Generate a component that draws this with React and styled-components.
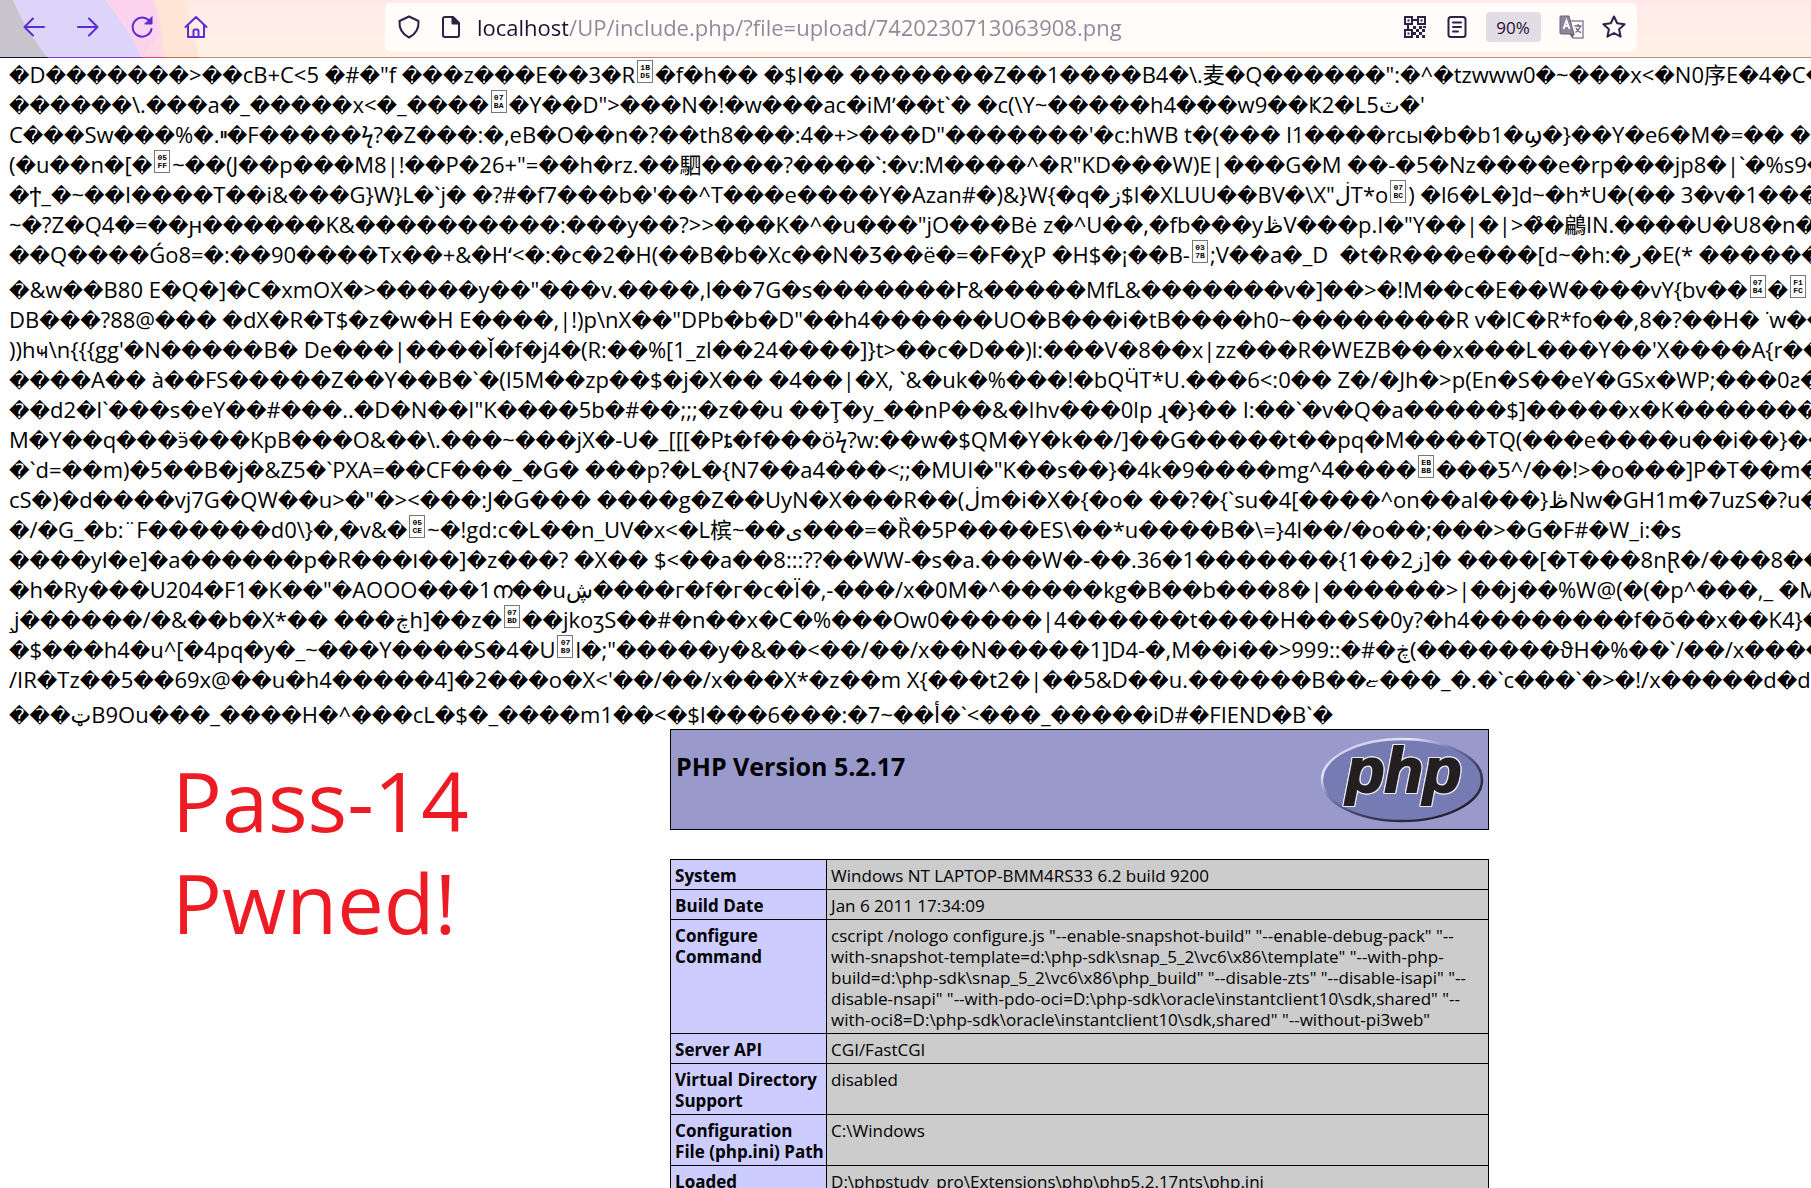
import React from "react";
import styled, { createGlobalStyle, css } from "styled-components";

const Global = createGlobalStyle`
  * { box-sizing: border-box; }
  html, body { margin: 0; background: #fff; }
  body {
    color: #000;
    font-family: "Open Sans", "Noto Sans", "DejaVu Sans", "Noto Sans CJK SC", sans-serif;
    overflow: hidden;
  }
`;

const Window = styled.div`
  height: 100vh;
  display: flex;
  flex-direction: column;
  overflow: hidden;
`;

/* ---------- browser toolbar ---------- */

const Toolbar = styled.header`
  position: relative;
  flex: none;
  display: flex;
  align-items: center;
  height: 58px;
  padding: 0 0 4px 7px;
  background: linear-gradient(#ffe9e8, #fff2e5);
`;

const ThemeArt = styled.svg`
  position: absolute;
  inset: 0;
  width: 100%;
  height: 58px;
`;

const NavGroup = styled.nav`
  position: relative;
  display: flex;
  width: 216px;
`;

const Spacer = styled.div`
  flex: ${(p) => p.$grow} 1 0;
`;

const IconButton = styled.button`
  display: flex;
  align-items: center;
  justify-content: center;
  width: ${(p) => p.$w || 54}px;
  height: 48px;
  padding: 0;
  border: 0;
  background: none;
  color: ${(p) => (p.$nav ? "#5b2bd3" : "#2b2149")};
`;

const UrlBar = styled.form`
  position: relative;
  flex: 100 1 0;
  display: flex;
  align-items: center;
  height: 48px;
  padding: 0 2px 0 4px;
  border-radius: 5px;
  background: #fffcfa;
`;

const UrlInput = styled.input`
  flex: 1;
  min-width: 0;
  height: 40px;
  margin-left: 4px;
  padding: 0;
  border: 0;
  outline: 0;
  font: 22px "Open Sans", sans-serif;
  color: transparent;
  background: linear-gradient(90deg, #1c1235 91px, #8d879a 91px);
  -webkit-background-clip: text;
  background-clip: text;
`;

const ZoomBadge = styled.button`
  width: 55px;
  height: 30px;
  margin: 0 10px 0 8px;
  padding: 0;
  border: 0;
  border-radius: 4px;
  background: #e2dde4;
  color: #1c1235;
  font: 17px "Open Sans", sans-serif;
`;

const Icon = ({ size = 24, children, sw = 2 }) => (
  <svg width={size} height={size} viewBox="0 0 24 24" fill="none" stroke="currentColor"
    strokeWidth={sw} strokeLinecap="round" strokeLinejoin="round" aria-hidden="true">
    {children}
  </svg>
);

const QrIcon = () => (
  <Icon sw={0}>
    <g fill="currentColor" fillRule="evenodd">
      <path d="M1 1h9v9H1zM3 3v5h5V3zM14 1h9v9h-9zM16 3v5h5V3zM1 14h9v9H1zM3 16v5h5v-5z" />
      <path d="M4.500 4.500h2v2h-2zM17.500 4.500h2v2h-2zM4.500 17.500h2v2h-2zM10 4h4v2h-4zM4 10h2v4H4z" />
      <path d="M10 11h3v3h-3zM13 14h3v3h-3zM16 11h3v3h-3zM19 14h3v3h-3zM10 17h3v3h-3zM16 17h3v3h-3zM13 20h3v3h-3zM19 20h3v3h-3zM20 11h3v2h-3z" />
    </g>
  </Icon>
);

const TranslateIcon = () => (
  <svg width="26" height="26" viewBox="0 0 26 26" aria-hidden="true">
    <path d="M12 7h12v17H14l-3-4" fill="#fffcfa" stroke="#8d879a" strokeWidth="1.500" />
    <path d="M2 2h8l5 18H2a1 1 0 0 1-1-1V3a1 1 0 0 1 1-1z" fill="#8d879a" stroke="#6a6380" />
    <path d="M11 20h5l-3 4z" fill="#6a6380" />
    <path d="M4.500 15 7.500 6.500 10.500 15M5.500 12h4" fill="none" stroke="#fff" strokeWidth="1.800" />
    <path d="M15.500 12h7M19 10v2M21.500 12c-1 3-3 5-5 6.500M17 14c1 2 3 4 5 4.500" fill="none" stroke="#6a6380" strokeWidth="1.300" />
  </svg>
);

/* ---------- raw file dump ---------- */

const Page = styled.main`
  flex: 1;
  min-height: 0;
  padding-top: 1px;
  overflow: hidden;
`;

const Dump = styled.div`
  padding-left: 9px;
  font-size: 22px;
  line-height: 30px;
  white-space: pre;
  direction: ltr;
  unicode-bidi: bidi-override;
`;

const Line = styled.div`
  height: ${(p) => (p.$tall ? 35 : 30)}px;
  padding-top: ${(p) => (p.$tall ? 5 : 0)}px;
`;

const Unknown = styled.span`
  font: 20px/20px "DejaVu Sans", sans-serif;
`;

const HexBox = styled.span`
  display: inline-flex;
  flex-direction: column;
  align-items: center;
  justify-content: center;
  width: 16px;
  height: 23px;
  margin: 1px 2px 0;
  border: 1px solid #777;
  vertical-align: top;
  font: bold 8px/8px "Liberation Mono", monospace;
`;

const LINES = [
  `�D�������>��cB+C<5 �#�"f ���z���E��3�R{1BD5}�f�h�� �$I�� �������Z��1����B4�\\.麦�Q������":�^�tzwww0�~���x<�N0序E�4�C�`,
  `������\\.���a�_�����x<�_����{07BA}�Y��D">���N�!�w���ac�iMʼ��t\`� �c(\\Y~�����h4���w9��Ҝ2�L5ٽ�'`,
  `C���Sw���%�.ײ�F�����ϟ?�Z���:�,eB�O��n�?��th8���:4�+>���D"�������'�c:hWB t�(��� l1����rсы�b�b1�ϣ�}��Y�e6�M�=�� �`,
  `(�u��n�[�{05FF}~��(J��p���M8|!��P�26+"=��h�rz.��駟����?����\`:�v:M����^�R"KD���W)E|���G�M ��-�5�Nz����e�rp���jp8�|\`�%s9�`,
  `�ϯ_�~��I����T��i&���G}W}L�\`j� �?#�f7���b�'��^T���e����Y�Azan#�)&}W{�q�ز$I�XLUU��BV�\\X"ڶT*o{07BC}) �l6�L�]d~�h*U�(�� 3�v�1���`,
  `~�?Z�Q4�=��ԩ������K&����������:���y��?>>���K�^�u���"jO���Bė z�^U��,�fb���yڟV���p.I�"Y��|�|>�̊�鶣lN.����U�U8�n�`,
  `��Q����Ǵo8=�:��90����Tx��+&�Hʻ<�:�c�2�H(��B�b�Xc��N�Ʒ��ë�=�F�χP �H$�¡��B-{037B};V��a�_D  �t�R���e���[d~�h:�ر�E(* ������`,
  `�&w��B80 E�Q�]�C�xmOX�>�����y��"���v.����,I��7G�s�������Ւ&�����MfL&�������v�]��>�!M��c�E��W����vY{bv��{07B4}�{F1FC}`,
  `DB���?88@��� �dX�R�T$�z�w�H E����,|!)p\\nX��"DPb�b�D"��h4������UO�B���i�tB����h0~��������R v�lC�R*fo��,8�?��H� ˙w��`,
  `))hҹ\\n{{{gg'�N�����B� De���|����Ǐ�f�j4�(R:��%[1_zI��24����]}t>��c�D��)l:���V�8��x|zz���R�WEZB���x���L���Y��'X����A{r���`,
  `����A�� à��FS�����Z��Y��B�\`�(I5M��zp��$�j�X�� �4��|�X, \`&�uk�%���!�bQӴT*U.���6<:0�� Z�/�Jh�>p(En�S��eY�GSx�WP;���0ƨ�`,
  `��d2�l\`���s�eY��#���..�D�N��I"K����5b�#��;;;�z��u ��Ţ�y_��nP��&�Ihv���0lp ɻ�}�� I:��\`�v�Q�a�����$]�����x�K��������`,
  `M�Y��q���ӭ���KpB���O&��\\.���~���jX�-U�_[[[�Pȶ�f���öϟ?w:��w�$QM�Y�k��/]��G�����t��pq�M����TQ(���e����u��i��}��`,
  `�\`d=��m)�5��B�j�&Z5�\`PXA=��CF���_�G� ���p?�L�{N7��a4���<;;�MUI�"K��s��}�4k�9����mg^4����{EBBB}���Ƽ^/��!>�o���]P�T��m�`,
  `cS�)�d����vj7G�QW��u>�"�><���:J�G��� ����g�Z��UyN�X���R��(ڶm�i�X�{�o� ��?�{\`su�4[����^on��al���}ڟNw�GH1m�7uzS�?u�`,
  `�/�G_�b:¨F������d0\\}�,�v&�{05CE}~�!gd:c�L��n_UV�x<�L槟~��ی���=�Ȑ�5P����ES\\��*u����B�\\=}4l��/�o��;���>�G�F#�W_i:�s`,
  `����yl�e]�a������p�R���ו��]�z���? �X�� $<��a��8:::??��WW-�s�a.���W�-��.36�1�������{1��2ز]� ����[�T���8nⱤ�/���8��`,
  `�h�Ry���U204�F1�K��"�AOOO���1ന��uڜ����г�f�г�c�Ï�,-���/x�0M�^�����kg�B��b���8�|������>|��j��%W@(�(�p^���,_ �M`,
  `¸j������/�&��b�X*�� ���ڿh]��z�{07BD}��jkoʒS��#�n��x�C�%���Ow0�����|4������t����H���S�0y?�h4��������f�õ��x��K4}��`,
  `�$���h4�u^[�4pq�y�_~���Y����S�4�U{07B9}l�;"�����y�&��<��/��/x��N�����1]D4-�,M��i��>999::�#�ڿ(�������ϑH�%��\`/��/x����`,
  `/IR�Tz��5��69x@��u�h4�����4]�2���o�X<'��/��/x���X*�z��m X{���t2�|��5&D��u.������B��ޏ���_�.�\`c���\`�>�!/x�����d�d`,
  `���ټB9Ou���_����H�^���cL�$�_����m1��<�$I���6���:�7~��أ�\`<���_�����iD#�FIEND�B\`�`,
];

const TALL = new Set([7, 21]);

function renderLine(text) {
  return text.split(/(�[�\u030A]*|\{[0-9A-F]{4}\})/).map((part, i) => {
    if (part.startsWith("�")) return <Unknown key={i}>{part}</Unknown>;
    if (/^\{[0-9A-F]{4}\}$/.test(part))
      return (
        <HexBox key={i}>
          <span>{part.slice(1, 3)}</span>
          <span>{part.slice(3, 5)}</span>
        </HexBox>
      );
    return part;
  });
}

/* ---------- phpinfo ---------- */

const InfoArea = styled.div`
  display: flex;
  align-items: flex-start;
`;

const Note = styled.p`
  flex: 0 0 37%;
  margin: 0;
  padding: 20px 0 0 172px;
  color: #ed1c24;
  font-size: 83px;
  line-height: 102px;
`;

const Info = styled.section`
  flex: none;
  width: 819px;
`;

const Banner = styled.div`
  display: flex;
  justify-content: space-between;
  align-items: flex-start;
  height: 101px;
  margin-bottom: 29px;
  padding: 7px 4px 0 5px;
  border: 1px solid #000;
  background: #9999cc;
`;

const Title = styled.h1`
  margin: 12px 0 0;
  font-size: 25px;
  line-height: 34px;
`;

const Table = styled.table`
  width: 100%;
  border-collapse: collapse;
  table-layout: fixed;
  font-size: 17px;
  line-height: 21px;
`;

const cell = css`
  padding: 5px 4px 3px;
  border: 1px solid #000;
  text-align: left;
  vertical-align: top;
`;

const Key = styled.th`
  ${cell}
  width: 156px;
  background: #ccccff;
  white-space: pre;
`;

const Value = styled.td`
  ${cell}
  background: #cccccc;
  white-space: pre-line;
`;

const LogoText = styled.text`
  font: italic bold 63px "Liberation Sans", sans-serif;
  fill: #231f20;
  stroke: #231f20;
  stroke-width: 2px;
  filter: drop-shadow(1px 0 0 #e8e8f0) drop-shadow(-1px 0 0 #e8e8f0)
    drop-shadow(0 1px 0 #e8e8f0) drop-shadow(0 -1px 0 #e8e8f0);
`;

const PhpLogo = () => (
  <svg width="164" height="86" viewBox="0 0 164 86" role="img" aria-label="PHP logo">
    <defs>
      <linearGradient id="rim" x1="0.100" y1="0" x2="0.900" y2="1">
        <stop offset="0" stopColor="#b9bce0" />
        <stop offset="0.220" stopColor="#e6e8f8" />
        <stop offset="0.400" stopColor="#777bb3" />
        <stop offset="0.650" stopColor="#3a3a5c" />
        <stop offset="1" stopColor="#16161f" />
      </linearGradient>
    </defs>
    <ellipse cx="82" cy="43" rx="80" ry="41" fill="#777bb3" stroke="url(#rim)" strokeWidth="2.500" />
    <LogoText x="26" y="55">php</LogoText>
  </svg>
);

const ROWS = [
  ["System", "Windows NT LAPTOP-BMM4RS33 6.2 build 9200"],
  ["Build Date", "Jan 6 2011 17:34:09"],
  ["Configure\nCommand", `cscript /nologo configure.js "--enable-snapshot-build" "--enable-debug-pack" "--
with-snapshot-template=d:\\php-sdk\\snap_5_2\\vc6\\x86\\template" "--with-php-
build=d:\\php-sdk\\snap_5_2\\vc6\\x86\\php_build" "--disable-zts" "--disable-isapi" "--
disable-nsapi" "--with-pdo-oci=D:\\php-sdk\\oracle\\instantclient10\\sdk,shared" "--
with-oci8=D:\\php-sdk\\oracle\\instantclient10\\sdk,shared" "--without-pi3web"`],
  ["Server API", "CGI/FastCGI"],
  ["Virtual Directory\nSupport", "disabled"],
  ["Configuration\nFile (php.ini) Path", "C:\\Windows"],
  ["Loaded\nConfiguration File", "D:\\phpstudy_pro\\Extensions\\php\\php5.2.17nts\\php.ini"],
];

export default function App() {
  return (
    <Window>
      <Global />
      <Toolbar>
        <ThemeArt aria-hidden="true">
          <path d="M150 0H184Q194 28 199 58H150z" fill="#ffe5d6" />
          <path d="M90 0H153Q164 28 164 58H120z" fill="#ffd9e4" />
          <path d="M90 0H105Q128 28 142 58H90z" fill="#e2d3f7" />
          <path d="M105 0H153Q158 16 160 34L142 58Q128 28 105 0z" fill="#fbd0f3" opacity="0.700" />
          <path d="M13 0H105Q128 28 142 58H48Q24 28 13 0z" fill="#ddd4f9" />
          <path d="M0 0H13Q24 28 48 58H0z" fill="#c8c4cd" />
          <path d="M0 57.500H48" stroke="#1c1235" />
          <path d="M48 57.500H142" stroke="#7a3fc9" />
          <path d="M142 57.500H164" stroke="#c8497e" />
          <path d="M164 57.500H199" stroke="#cf6c45" />
          <path d="M199 57.500H4000" stroke="#bb8b7b" />
        </ThemeArt>
        <NavGroup>
          <IconButton $nav aria-label="Back">
            <Icon><path d="M22 12H3M11 3.500 2.500 12 11 20.500" /></Icon>
          </IconButton>
          <IconButton $nav aria-label="Forward">
            <Icon><path d="M2 12h19M13 3.500 21.500 12 13 20.500" /></Icon>
          </IconButton>
          <IconButton $nav aria-label="Reload">
            <Icon>
              <path d="M20.500 7.500A9.500 9.500 0 1 0 21.500 14" />
              <path d="M22 2v7h-7z" fill="currentColor" strokeWidth="1" />
            </Icon>
          </IconButton>
          <IconButton $nav aria-label="Home">
            <Icon><path d="M1.500 12 12 2l10.500 10M4 10v12h16V10M9.500 22v-6a1.500 1.500 0 0 1 1.500-1.500h2a1.500 1.500 0 0 1 1.500 1.500v6" /></Icon>
          </IconButton>
        </NavGroup>
        <Spacer $grow={13} />
        <UrlBar onSubmit={(e) => e.preventDefault()}>
          <IconButton type="button" $w={40} aria-label="Tracking protection">
            <Icon><path d="M12 1.500 21.500 6c.5 7-2.500 13-9.500 16.500C5 19 2 13 2.500 6z" /></Icon>
          </IconButton>
          <IconButton type="button" $w={44} aria-label="Site information">
            <Icon>
              <path d="M6 2h8l6 6v12a2 2 0 0 1-2 2H6a2 2 0 0 1-2-2V4a2 2 0 0 1 2-2z" />
              <path d="M13.500 2v6.500H20z" fill="currentColor" />
            </Icon>
          </IconButton>
          <UrlInput aria-label="Address" defaultValue="localhost/UP/include.php/?file=upload/7420230713063908.png" />
          <IconButton type="button" $w={42} aria-label="QR code"><QrIcon /></IconButton>
          <IconButton type="button" $w={42} aria-label="Reader view">
            <Icon><rect x="3.500" y="2" width="17" height="20" rx="2.500" /><path d="M8 7.500h8M8 12h8M8 16.500h5" /></Icon>
          </IconButton>
          <ZoomBadge type="button">90%</ZoomBadge>
          <IconButton type="button" $w={42} aria-label="Translate"><TranslateIcon /></IconButton>
          <IconButton type="button" $w={42} aria-label="Bookmark">
            <Icon><path d="M12 1.500 15.200 8.300 22.600 9.200 17.100 14.300 18.600 21.700 12 18 5.400 21.700 6.900 14.300 1.400 9.200 8.800 8.300z" /></Icon>
          </IconButton>
        </UrlBar>
        <Spacer $grow={14} />
      </Toolbar>
      <Page>
        <Dump>
          {LINES.map((text, i) => (
            <Line key={i} $tall={TALL.has(i)}>{renderLine(text)}</Line>
          ))}
        </Dump>
        <InfoArea>
          <Note>Pass-14<br />Pwned!</Note>
          <Info>
            <Banner>
              <Title>PHP Version 5.2.17</Title>
              <PhpLogo />
            </Banner>
            <Table>
              <tbody>
                {ROWS.map(([name, value]) => (
                  <tr key={name}>
                    <Key scope="row">{name}</Key>
                    <Value>{value}</Value>
                  </tr>
                ))}
              </tbody>
            </Table>
          </Info>
        </InfoArea>
      </Page>
    </Window>
  );
}
